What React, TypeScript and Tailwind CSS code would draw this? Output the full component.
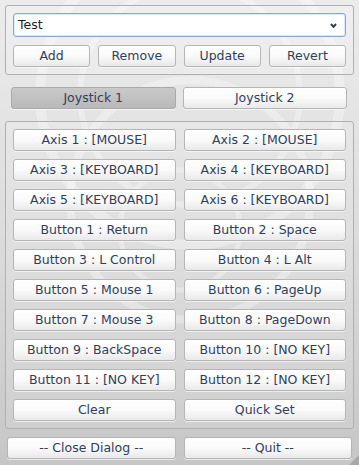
import React from "react";

const font = { fontFamily: '"DejaVu Sans", Verdana, sans-serif' };

function Btn({ label, pressed = false }: { label: string; pressed?: boolean }) {
  return (
    <button
      className={
        "h-[22px] w-full rounded-[3px] border text-[12.5px] leading-none text-[#2f3e5a] shadow-[0_1px_0_rgba(255,255,255,0.6)] " +
        (pressed
          ? "border-[#a9a9a9] bg-gradient-to-b from-[#c9c9c9] to-[#b9b9b9]"
          : "border-[#b5b5b5] bg-gradient-to-b from-[#ffffff] via-[#fafafa] to-[#e9e9e9]")
      }
      style={font}
    >
      {label}
    </button>
  );
}

const rows: [string, string][] = [
  ["Axis 1 : [MOUSE]", "Axis 2 : [MOUSE]"],
  ["Axis 3 : [KEYBOARD]", "Axis 4 : [KEYBOARD]"],
  ["Axis 5 : [KEYBOARD]", "Axis 6 : [KEYBOARD]"],
  ["Button 1 : Return", "Button 2 : Space"],
  ["Button 3 : L Control", "Button 4 : L Alt"],
  ["Button 5 : Mouse 1", "Button 6 : PageUp"],
  ["Button 7 : Mouse 3", "Button 8 : PageDown"],
  ["Button 9 : BackSpace", "Button 10 : [NO KEY]"],
  ["Button 11 : [NO KEY]", "Button 12 : [NO KEY]"],
  ["Clear", "Quick Set"],
];

export default function App() {
  return (
    <div
      className="relative h-[465px] w-[359px] overflow-hidden bg-gradient-to-b from-[#ececec] via-[#dcdcdc] to-[#c6c6c6]"
      style={font}
    >
      <svg className="pointer-events-none absolute inset-0" width="359" height="465">
        <g fill="none" stroke="#ffffff" strokeOpacity="0.3">
          <circle cx="190" cy="95" r="150" strokeWidth="10" />
          <circle cx="190" cy="95" r="110" strokeWidth="6" />
          <circle cx="190" cy="200" r="120" strokeWidth="8" />
          <circle cx="180" cy="230" r="60" strokeWidth="5" />
        </g>
      </svg>
      <div className="relative flex flex-col">
        <div className="mx-[5px] mt-[5px] flex h-[70px] flex-col gap-[8px] rounded-[3px] border border-[#b0b0b0] bg-white/20 p-[7px]">
          <div className="relative flex h-[24px] items-center rounded-[3px] border border-[#86a9d4] bg-white pl-[4px] text-[12.5px] text-[#1e1e1e] shadow-[inset_0_0_0_1px_rgba(160,190,230,0.35)]">
            Test
            <svg className="absolute right-[8px] top-[9px]" width="7" height="5" viewBox="0 0 7 5">
              <path d="M1 1 L3.5 3.8 L6 1" fill="none" stroke="#2c3b57" strokeWidth="2" />
            </svg>
          </div>
          <div className="grid grid-cols-4 gap-[8px]">
            <Btn label="Add" />
            <Btn label="Remove" />
            <Btn label="Update" />
            <Btn label="Revert" />
          </div>
        </div>
        <div className="ml-[11px] mr-[12px] mt-[12px] grid grid-cols-2 gap-[7px]">
          <Btn label="Joystick 1" pressed />
          <Btn label="Joystick 2" />
        </div>
        <div className="mx-[5px] mt-[12px] flex flex-col gap-[8px] rounded-[3px] border border-[#b0b0b0] bg-white/10 px-[7px] pb-[7px] pt-[7px]">
          {rows.map(([a, b]) => (
            <div key={a} className="grid grid-cols-2 gap-[8px]">
              <Btn label={a} />
              <Btn label={b} />
            </div>
          ))}
        </div>
        <div className="ml-[7px] mr-[7px] mt-[8px] grid grid-cols-2 gap-[8px]">
          <Btn label="-- Close Dialog --" />
          <Btn label="-- Quit --" />
        </div>
      </div>
      <svg className="absolute bottom-0 right-0" width="10" height="10" viewBox="0 0 10 10">
        <path d="M10 0 L10 10 L0 10 Z" fill="#a8a8a8" />
      </svg>
    </div>
  );
}
